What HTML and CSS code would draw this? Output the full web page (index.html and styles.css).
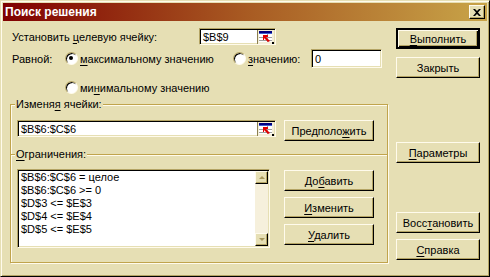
FILE: index.html
```html
<!DOCTYPE html>
<html lang="ru">
<head>
  <meta charset="UTF-8">
  <title>Поиск решения</title>
  <link rel="stylesheet" href="styles.css">
</head>
<body>

  <div class="okno">
    <div class="zagolovok">
      <span class="zag-tekst">Поиск решения</span>
      <span class="knopka-x">
        <svg width="8" height="7" viewBox="0 0 8 7"><path d="M0 0h2l2 2 2-2h2L5 3.5 8 7H6L4 5 2 7H0l3-3.5z" fill="#000"/></svg>
      </span>
    </div>

    <div class="telo">
      <div class="levo">
        <div class="stroka stroka-cel">
          <span class="metka metka-cel">Установить <u>ц</u>елевую ячейку:</span>
          <div class="pole pole-cel">
            <span class="pole-tekst">$B$9</span>
            <span class="ref">
              <svg width="17" height="14" viewBox="0 0 17 14">
                <rect x="0" y="0" width="1" height="14" fill="#8c8050"/>
                <rect x="1" y="0" width="16" height="14" fill="#f4efd8"/>
                <rect x="2" y="1" width="13" height="11" fill="#fff"/>
                <rect x="2" y="1" width="13" height="2" fill="#000080"/>
                <rect x="2" y="3" width="13" height="1" fill="#4060d0"/>
                <path d="M10.5 4v8M2 7.5h13M2 10.5h13" stroke="#a0a0a0" stroke-width="1"/>
                <path d="M6 5h5v2H9l4 4-2 1-4-4v2H6z" fill="#e00000"/>
                <rect x="15" y="12" width="2" height="2" fill="#000"/>
              </svg>
            </span>
          </div>
        </div>

        <div class="stroka stroka-ravno">
          <span class="metka metka-ravno">Равной:</span>
          <span class="variant variant-max"><span class="radio vybran"></span><span><u>м</u>аксимальному значению</span></span>
          <span class="variant variant-zn"><span class="radio"></span><span><u>з</u>начению:</span></span>
          <div class="pole pole-zn"><span class="pole-tekst">0</span></div>
        </div>

        <div class="stroka stroka-min">
          <span class="variant"><span class="radio"></span><span>ми<u>н</u>имальному значению</span></span>
        </div>

        <fieldset class="gruppa gruppa-izm">
          <legend>Изменя<u>я</u> ячейки:</legend>
          <div class="gruppa-vnutri">
            <div class="pole pole-izm">
              <span class="pole-tekst">$B$6:$C$6</span>
              <span class="ref">
                <svg width="17" height="14" viewBox="0 0 17 14">
                  <rect x="0" y="0" width="1" height="14" fill="#8c8050"/>
                  <rect x="1" y="0" width="16" height="14" fill="#f4efd8"/>
                  <rect x="2" y="1" width="13" height="11" fill="#fff"/>
                  <rect x="2" y="1" width="13" height="2" fill="#000080"/>
                  <rect x="2" y="3" width="13" height="1" fill="#4060d0"/>
                  <path d="M10.5 4v8M2 7.5h13M2 10.5h13" stroke="#a0a0a0" stroke-width="1"/>
                  <path d="M6 5h5v2H9l4 4-2 1-4-4v2H6z" fill="#e00000"/>
                  <rect x="15" y="12" width="2" height="2" fill="#000"/>
                </svg>
              </span>
            </div>
            <button class="knopka knopka-sred">Предполо<u>ж</u>ить</button>
          </div>
        </fieldset>

        <fieldset class="gruppa gruppa-ogr">
          <legend><u>О</u>граничения:</legend>
          <div class="gruppa-vnutri">
            <div class="spisok">
              <div class="spisok-stroki">
                <div>$B$6:$C$6 = целое</div>
                <div>$B$6:$C$6 &gt;= 0</div>
                <div>$D$3 &lt;= $E$3</div>
                <div>$D$4 &lt;= $E$4</div>
                <div>$D$5 &lt;= $E$5</div>
              </div>
              <div class="prokrutka">
                <span class="strelka"><span class="tr tr-verh"></span></span>
                <span class="dorozhka"></span>
                <span class="strelka"><span class="tr tr-niz"></span></span>
              </div>
            </div>
            <div class="knopki-ogr">
              <button class="knopka knopka-sred">До<u>б</u>авить</button>
              <button class="knopka knopka-sred"><u>И</u>зменить</button>
              <button class="knopka knopka-sred"><u>У</u>далить</button>
            </div>
          </div>
        </fieldset>
      </div>

      <div class="pravo">
        <button class="knopka glavnaya"><u>В</u>ыполнить</button>
        <button class="knopka k-zakryt">Закрыть</button>
        <button class="knopka k-param"><u>П</u>араметры</button>
        <button class="knopka k-vosst">Восс<u>т</u>ановить</button>
        <button class="knopka k-sprav"><u>С</u>правка</button>
      </div>
    </div>
  </div>

</body>
</html>
```

FILE: styles.css
```css
body {
  margin: 0;
  background: #e6dfb4;
  font-family: "Liberation Sans", Arial, sans-serif;
  font-size: 11px;
  color: #000;
}

u {
  text-decoration-thickness: 1px;
  text-underline-offset: 2px;
}

.okno {
  width: 490px;
  height: 277px;
  box-sizing: border-box;
  background: #e6dfb4;
  border: 1px solid;
  border-color: #e6dfb4 #000 #000 #e6dfb4;
  box-shadow: inset 1px 1px 0 #fffbec, inset -1px -1px 0 #b4a464;
  padding: 2px;
}

.zagolovok {
  height: 18px;
  background: linear-gradient(to right, #800000, #a85a22 50%, #c8a448);
  display: flex;
  align-items: center;
  justify-content: space-between;
  color: #fff;
}

.zag-tekst {
  font-weight: bold;
  font-size: 12px;
  padding-left: 2px;
}

.knopka-x {
  width: 16px;
  height: 14px;
  box-sizing: border-box;
  margin-right: 2px;
  background: #e6dfb4;
  border: 1px solid;
  border-color: #fffbec #000 #000 #fffbec;
  box-shadow: inset -1px -1px 0 #b4a464;
  display: flex;
  align-items: center;
  justify-content: center;
}

.telo {
  display: flex;
  gap: 8px;
  padding: 7px 7px 0 7px;
}

.levo {
  width: 378px;
}

.pravo {
  width: 84px;
  display: flex;
  flex-direction: column;
}

.stroka {
  display: flex;
  align-items: center;
}

.metka-cel {
  width: 187px;
  padding-left: 2px;
}

.stroka-ravno {
  margin-top: 4px;
}

.metka-ravno {
  width: 53px;
  padding-left: 2px;
}

.variant {
  display: flex;
  align-items: center;
  gap: 2px;
}

.variant-max {
  width: 168px;
}

.variant-zn {
  width: 78px;
}

.stroka-min {
  margin-top: 13px;
  padding-left: 55px;
}

.radio {
  width: 13px;
  height: 13px;
  box-sizing: border-box;
  border-radius: 50%;
  background: #fff;
  border: 1px solid;
  border-color: #b4a464 #fffbec #fffbec #b4a464;
  box-shadow: inset 1px 1px 0 #000;
  position: relative;
}

.radio.vybran::after {
  content: "";
  position: absolute;
  left: 3px;
  top: 3px;
  width: 4px;
  height: 4px;
  border-radius: 50%;
  background: #000;
}

.pole {
  height: 17px;
  box-sizing: border-box;
  background: #fff;
  border: 1px solid;
  border-color: #b4a464 #fffbec #fffbec #b4a464;
  box-shadow: inset 1px 1px 0 #000, inset -1px -1px 0 #e6dfb4;
  display: flex;
  align-items: center;
  padding: 0 1px 0 3px;
}

.pole-tekst {
  flex: 1;
}

.pole-cel {
  width: 77px;
}

.pole-zn {
  width: 71px;
  height: 19px;
}

.ref {
  display: flex;
}

.gruppa {
  margin: 0;
  padding: 0;
  border: 1px solid #c0a44c;
  box-shadow: inset 1px 1px 0 #fffbec, 1px 1px 0 #fffbec;
  min-width: 0;
}

.gruppa legend {
  margin-left: 4px;
  padding: 0 1px;
  line-height: 13px;
  background: #e6dfb4;
}

.gruppa-izm {
  margin-top: 4px;
}

.gruppa-vnutri {
  display: flex;
  padding: 9px 6px 13px 6px;
}

.pole-izm {
  width: 259px;
  margin-top: 0;
}

.gruppa-izm .knopka-sred {
  margin-left: 8px;
}

.gruppa-ogr {
  margin-top: -7px;
  position: relative;
}

.gruppa-ogr .gruppa-vnutri {
  padding: 8px 6px 14px 6px;
}

.spisok {
  width: 253px;
  height: 79px;
  box-sizing: border-box;
  background: #fff;
  border: 1px solid;
  border-color: #b4a464 #fffbec #fffbec #b4a464;
  box-shadow: inset 1px 1px 0 #000, inset -1px -1px 0 #e6dfb4;
  padding: 1px;
  display: flex;
}

.spisok-stroki {
  flex: 1;
  padding-left: 2px;
  line-height: 13px;
}

.prokrutka {
  width: 13px;
  display: flex;
  flex-direction: column;
  background: #f6f0dc;
}

.dorozhka {
  flex: 1;
}

.strelka {
  height: 13px;
  box-sizing: border-box;
  background: #e6dfb4;
  border: 1px solid;
  border-color: #fffbec #000 #000 #fffbec;
  box-shadow: inset -1px -1px 0 #b4a464;
  display: flex;
  align-items: center;
  justify-content: center;
}

.tr {
  width: 0;
  height: 0;
  border-left: 3px solid transparent;
  border-right: 3px solid transparent;
}

.tr-verh {
  border-bottom: 3px solid #a8985c;
}

.tr-niz {
  border-top: 3px solid #a8985c;
}

.knopki-ogr {
  margin-left: 14px;
  display: flex;
  flex-direction: column;
  gap: 6px;
  padding-top: 1px;
}

.knopka {
  height: 21px;
  box-sizing: border-box;
  font-family: "Liberation Sans", Arial, sans-serif;
  font-size: 11px;
  color: #000;
  background: #e6dfb4;
  border: 1px solid;
  border-color: #fffbec #000 #000 #fffbec;
  box-shadow: inset -1px -1px 0 #b4a464;
  padding: 0;
}

.knopka-sred {
  width: 90px;
}

.pravo .knopka {
  width: 84px;
}

.glavnaya {
  border-width: 2px;
  border-color: #000;
  box-shadow: inset 1px 1px 0 #fffbec, inset -1px -1px 0 #000, inset -2px -2px 0 #b4a464;
}

.k-zakryt {
  margin-top: 8px;
}

.k-param {
  margin-top: 64px;
}

.k-vosst {
  margin-top: 49px;
}

.k-sprav {
  margin-top: 6px;
}
```
